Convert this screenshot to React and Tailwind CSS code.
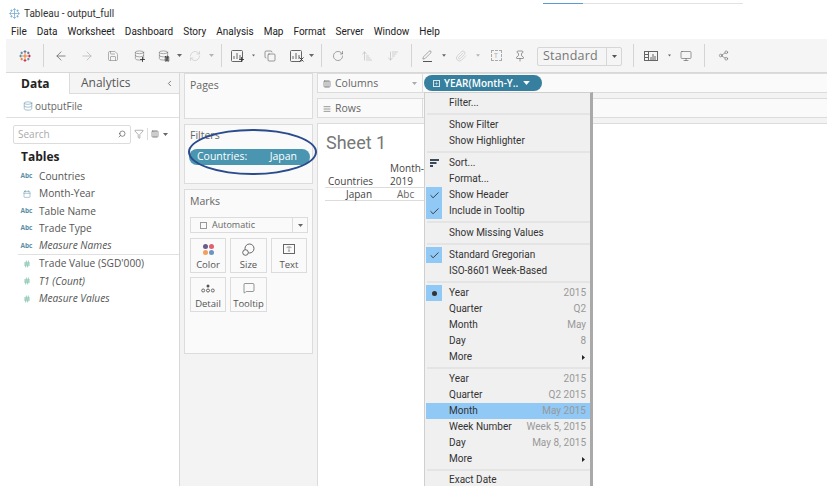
import React from "react";
import { ArrowLeft, ArrowRight, Save, Database, RefreshCw, Copy, Paperclip, Pin, Monitor, Share2, Search, Filter, Calendar, Hash, Check, Pen, Columns3, AlignJustify, ChevronLeft, MessageSquare, Type, ArrowDownWideNarrow, ArrowUpNarrowWide, X, Plus, Pause, RotateCw } from "lucide-react";

const Logo = ({ size = 14, mono }) => {
  const c = mono ? ["#7fb2d6", "#7fb2d6", "#7fb2d6", "#7fb2d6"] : ["#e8762b", "#c72037", "#5b6591", "#59879b"];
  return (
    <svg width={size} height={size} viewBox="0 0 20 20" strokeWidth="1.6" strokeLinecap="round">
      <path d="M10 6v8M6 10h8" stroke={c[0]} />
      <path d="M10 1v3.4M8.3 2.7h3.4" stroke={c[2]} />
      <path d="M10 15.6V19M8.3 17.3h3.4" stroke={c[1]} />
      <path d="M1 10h3.4M2.7 8.3v3.4" stroke={c[3]} />
      <path d="M15.6 10H19M17.3 8.3v3.4" stroke={c[1]} />
      <path d="M4.5 3.4v3M3 4.9h3" stroke={c[3]} />
      <path d="M15.5 3.4v3M14 4.9h3" stroke={c[2]} />
      <path d="M4.5 13.6v3M3 15.1h3" stroke={c[0]} />
      <path d="M15.5 13.6v3M14 15.1h3" stroke={c[3]} />
    </svg>
  );
};

const Caret = ({ className = "" }) => (
  <svg width="5" height="3" viewBox="0 0 5 3" className={className}><path d="M0 0h5L2.5 3z" fill="currentColor" /></svg>
);

const SheetIcon = () => (
  <svg width="12" height="12" viewBox="0 0 12 12" fill="none" stroke="currentColor" strokeWidth="1">
    <rect x="0.5" y="0.5" width="11" height="11" rx="1" />
    <path d="M3 9V6M6 9V3M9 9V5" />
  </svg>
);

const ShowMe = () => (
  <svg width="14" height="10" viewBox="0 0 14 10" fill="none" stroke="currentColor" strokeWidth="1">
    <rect x="0.5" y="0.5" width="13" height="9" />
    <path d="M4.5 0.5v9M0.5 3.5h4M0.5 6.5h4M7 9V6M9 9V3M11 9V5" />
  </svg>
);

const Cell = ({ className = "", children }) => (
  <div className={`flex items-center justify-center shrink-0 h-full ${className}`}>{children}</div>
);

const Sep = ({ className = "" }) => <div className={`w-px h-[23px] bg-[#d4d4d4] shrink-0 ${className}`} />;

const MenuBar = () => (
  <div className="flex items-center h-[15px] pl-[11px] gap-[10px] text-[10px] text-[#222]" style={{ fontFamily: 'Roboto, sans-serif' }}>
    {["File", "Data", "Worksheet", "Dashboard", "Story", "Analysis", "Map", "Format", "Server", "Window", "Help"].map((m) => (
      <span key={m}>{m}</span>
    ))}
  </div>
);

const Toolbar = () => (
  <div className="flex items-center h-[34px] ml-[6px] mr-[4px] bg-[#f5f5f5] border-b border-[#d8d8d8] text-[#666]">
    <Cell className="w-[37px]"><Logo size={12} /></Cell>
    <Sep />
    <div className="w-[4px]" />
    <Cell className="w-[26px]"><ArrowLeft size={14} strokeWidth={1.3} /></Cell>
    <Cell className="w-[26px] text-[#b5b5b5]"><ArrowRight size={14} strokeWidth={1.3} /></Cell>
    <Cell className="w-[26px] text-[#888]"><Save size={12} strokeWidth={1.3} /></Cell>
    <Cell className="w-[26px] relative"><Database size={11} strokeWidth={1.2} /><Plus size={7} strokeWidth={3} className="absolute right-[6px] bottom-[9px] text-[#333]" /></Cell>
    <Cell className="w-[22px] relative"><Database size={11} strokeWidth={1.2} /><Pause size={6} strokeWidth={3} className="absolute right-[4px] bottom-[10px] text-[#333]" /></Cell>
    <Cell className="w-[10px]"><Caret /></Cell>
    <Cell className="w-[22px] text-[#c2c2c2]"><RefreshCw size={12} strokeWidth={1.2} /></Cell>
    <Cell className="w-[10px] text-[#b5b5b5]"><Caret /></Cell>
    <Sep className="ml-[5px]" />
    <Cell className="w-[30px] relative"><SheetIcon /><Plus size={7} strokeWidth={3} className="absolute right-[7px] bottom-[9px] text-[#333]" /></Cell>
    <Cell className="w-[3px]"><Caret /></Cell>
    <Cell className="w-[30px]"><Copy size={12} strokeWidth={1.3} /></Cell>
    <Cell className="w-[22px] relative"><SheetIcon /><X size={7} strokeWidth={3} className="absolute right-[2px] bottom-[9px] text-[#333]" /></Cell>
    <Cell className="w-[8px]"><Caret /></Cell>
    <Sep className="ml-[6px]" />
    <Cell className="w-[32px]"><RotateCw size={12} strokeWidth={1.2} strokeDasharray="2 1.5" /></Cell>
    <Cell className="w-[26px] text-[#b5b5b5]"><ArrowUpNarrowWide size={12} strokeWidth={1.2} /></Cell>
    <Cell className="w-[26px] text-[#b5b5b5]"><ArrowDownWideNarrow size={12} strokeWidth={1.2} /></Cell>
    <Sep className="ml-[5px]" />
    <Cell className="w-[30px]">
      <div className="flex flex-col items-center">
        <Pen size={10} strokeWidth={1.3} />
        <div className="w-[9px] h-px bg-[#555] mt-[1px]" />
      </div>
    </Cell>
    <Cell className="w-[4px]"><Caret /></Cell>
    <Cell className="w-[30px] text-[#c2c2c2]"><Paperclip size={12} strokeWidth={1.3} /></Cell>
    <Cell className="w-[4px] text-[#b5b5b5]"><Caret /></Cell>
    <Cell className="w-[32px] text-[#aaa]"><div className="flex items-center justify-center w-[11px] h-[11px] border border-dashed border-[#aaa] text-[7px] leading-none">T</div></Cell>
    <Cell className="w-[16px]"><Pin size={12} strokeWidth={1.3} /></Cell>
    <div className="ml-[9px] mt-[1px] flex items-center w-[85px] h-[19px] border border-[#d6d6d6] rounded-[2px] text-[12.5px] text-[#777] shrink-0">
      <span className="pl-[5px] flex-1 tracking-[0.2px]">Standard</span>
      <div className="w-[15px] h-full border-l border-[#d6d6d6] flex items-center justify-center text-[#555]"><Caret /></div>
    </div>
    <Sep className="ml-[11px]" />
    <Cell className="w-[34px]"><ShowMe /></Cell>
    <Cell className="w-[3px]"><Caret /></Cell>
    <Cell className="w-[30px]"><Monitor size={12} strokeWidth={1.3} /></Cell>
    <Sep className="ml-[3px]" />
    <Cell className="w-[36px]"><Share2 size={11} strokeWidth={1.3} /></Cell>
  </div>
);

const Abc = () => <span className="text-[6.5px] font-bold text-[#5b8fa8] leading-none">Abc</span>;
const Num = () => <Hash size={8} strokeWidth={1.8} className="text-[#4aa88a]" />;

const Field = ({ icon, children, italic }) => (
  <div className="flex items-center h-[17.3px]">
    <div className="w-[19px] flex justify-center">{icon}</div>
    <span className={`ml-[3px] text-[10.2px] text-[#555] ${italic ? "italic" : ""}`}>{children}</span>
  </div>
);

const DataPane = () => (
  <div className="w-[174px] shrink-0 border-r border-[#d8d8d8] bg-white">
    <div className="flex h-[21px] bg-[#f5f5f5] border-b border-[#dcdcdc] text-[12px]">
      <div className="w-[64px] h-[21px] bg-white border-r border-[#dcdcdc] pl-[15px] font-bold text-[#222] flex items-center">Data</div>
      <div className="flex-1 pl-[11px] text-[#555] flex items-center justify-between pr-[5px]">
        <span>Analytics</span>
        <ChevronLeft size={9} />
      </div>
    </div>
    <div className="flex items-center h-[24px] pl-[17px] pt-[1px] border-b border-[#e0e0e0] text-[10px] text-[#666]">
      <Database size={10} strokeWidth={1.3} className="text-[#5b8fa8]" />
      <span className="ml-[2px]">outputFile</span>
    </div>
    <div className="flex items-center pt-[6px] pl-[7px] h-[26px]">
      <div className="flex items-center w-[118px] h-[19px] bg-white border border-[#dcdcdc] rounded-[2px] px-[4px] text-[10px] text-[#aaa]">
        <span className="flex-1">Search</span>
        <Search size={8} className="text-[#555] -scale-x-100" />
      </div>
      <Filter size={10} strokeWidth={1.2} className="ml-[3px] text-[#666]" />
      <div className="w-px h-[12px] bg-[#ddd] ml-[3px]" />
      <Columns3 size={8} strokeWidth={2} className="ml-[3px] text-[#666]" />
      <Caret className="ml-[4px] text-[#666]" />
    </div>
    <div className="pl-[15px] pt-[4px] h-[24px] text-[12px] font-bold text-[#222]">Tables</div>
    <div className="pl-[11px]">
      <Field icon={<Abc />}>Countries</Field>
      <Field icon={<Calendar size={8} strokeWidth={1.5} className="text-[#5b8fa8]" />}>Month-Year</Field>
      <Field icon={<Abc />}>Table Name</Field>
      <Field icon={<Abc />}>Trade Type</Field>
      <Field icon={<Abc />} italic>Measure Names</Field>
    </div>
    <div className="border-t border-[#e0e0e0] ml-[12px]">
      <div className="-ml-[1px]">
        <Field icon={<Num />}>Trade Value (SGD'000)</Field>
        <Field icon={<Num />} italic>T1 (Count)</Field>
        <Field icon={<Num />} italic>Measure Values</Field>
      </div>
    </div>
  </div>
);

const MarkBtn = ({ label, icon, className = "" }) => (
  <div className={`flex flex-col items-center h-[35px] border border-[#dcdcdc] bg-[#fafafa] text-[9.5px] text-[#555] ${className}`}>
    <div className="h-[20px] flex items-center">{icon}</div>
    <span className="leading-[12px]">{label}</span>
  </div>
);

const Cards = () => (
  <div className="w-[129px] ml-[4px] shrink-0 flex flex-col gap-[5px] text-[#666] text-[10.5px]">
    <div className="h-[46px] bg-[#fafafa] border border-[#dcdcdc] px-[5px] pt-[4px]">Pages</div>
    <div className="h-[60px] bg-[#fafafa] border border-[#dcdcdc] px-[5px] pt-[4px]">
      <div className="leading-[12px]">Filters</div>
      <div className="flex justify-between mt-[8px] -ml-[1px] w-[121px] h-[16px] items-center rounded-full bg-[#4a96b0] text-white pl-[8px] pr-[13px]">
        <span>Countries:</span><span>Japan</span>
      </div>
    </div>
    <div className="h-[165px] bg-[#fafafa] border border-[#dcdcdc] px-[5px] pt-[4px]">
      <div className="leading-[14px]">Marks</div>
      <div className="mt-[9px] flex items-center w-[118px] h-[16px] border border-[#dcdcdc] text-[9px]">
        <div className="w-[7px] h-[7px] border border-[#999] ml-[9px]" />
        <span className="ml-[5px] flex-1">Automatic</span>
        <div className="w-[15px] h-full border-l border-[#dcdcdc] flex items-center justify-center"><Caret /></div>
      </div>
      <div className="mt-[5px] grid grid-cols-[36px_37px_36px] gap-x-[4px] gap-y-[4px]">
        <MarkBtn label="Color" icon={<div className="grid grid-cols-2 gap-[1px]"><i className="w-[5px] h-[5px] rounded-full bg-[#6a5b8c]" /><i className="w-[5px] h-[5px] rounded-full bg-[#e2606e]" /><i className="w-[5px] h-[5px] rounded-full bg-[#f2a15c]" /><i className="w-[5px] h-[5px] rounded-full bg-[#6c94c4]" /></div>} />
        <MarkBtn label="Size" icon={<svg width="13" height="13" viewBox="0 0 13 13" fill="none" stroke="#666"><circle cx="7.5" cy="5.5" r="4.5" /><circle cx="3.5" cy="9.5" r="2.8" fill="#fafafa" /></svg>} />
        <MarkBtn label="Text" icon={<div className="w-[12px] h-[10px] border border-[#666] flex items-center justify-center"><Type size={6} /></div>} />
        <MarkBtn label="Detail" icon={<svg width="14" height="9" viewBox="0 0 14 9" fill="none" stroke="#666"><circle cx="7" cy="2" r="1.5" fill="#555" stroke="none" /><circle cx="2.2" cy="6.5" r="1.5" /><circle cx="7" cy="6.5" r="1.5" /><circle cx="11.8" cy="6.5" r="1.5" /></svg>} />
        <MarkBtn label="Tooltip" icon={<MessageSquare size={12} strokeWidth={1.2} />} />
      </div>
    </div>
  </div>
);

const Shelf = ({ icon, label, caret, children }) => (
  <div className="flex h-[20px] bg-[#fafafa] border-y border-[#dcdcdc] items-center">
    <div className="flex items-center w-[106px] h-full border-l border-r border-[#dcdcdc] pl-[5px] pr-[5px] pt-[1px] text-[10.5px] text-[#666]">
      {icon}
      <span className="ml-[4px] flex-1">{label}</span>
      {caret && <Caret className="text-[#aaa]" />}
    </div>
    {children}
  </div>
);

const Sheet = () => (
  <div className="flex-1 ml-[4px] flex flex-col min-w-0">
    <div className="flex flex-col gap-[5px]">
      <Shelf icon={<Columns3 size={8} strokeWidth={2} />} label="Columns" caret />
      <Shelf icon={<AlignJustify size={8} strokeWidth={2} />} label="Rows" />
    </div>
    <div className="mt-[5px] flex-1 bg-white border-l border-t border-[#dcdcdc] pl-[8px] pt-[6px]">
      <div className="text-[18px] leading-[26px] text-[#777]" style={{ fontFamily: 'Roboto, sans-serif' }}>Sheet 1</div>
      <div className="mt-[6px] -ml-[1px] w-[107px] text-[10px] text-[#444] font-medium">
        <div className="grid grid-cols-[62px_45px] leading-[13px] pl-[3px] h-[26px] border-b border-[#dcdcdc] items-end">
          <span>Countries</span>
          <span className="whitespace-nowrap">Month-<br />2019</span>
        </div>
        <div className="grid grid-cols-[72px_35px] h-[13px] leading-[12px] border-b border-[#dcdcdc]">
          <span className="pl-[21px]">Japan</span>
          <span className="font-normal text-[#666]">Abc</span>
        </div>
      </div>
    </div>
  </div>
);

const Row = ({ label, right, mark, active, more }) => (
  <div className={`flex items-center h-[16px] ${active ? "bg-[#90c8f6]" : ""}`}>
    <div className={`w-[16px] h-full flex items-center justify-center shrink-0 ${mark === "check" || mark === "dot" ? "bg-[#90c8f6]" : ""}`}>
      {mark === "check" && <Check size={11} strokeWidth={2} className="text-[#333]" />}
      {mark === "dot" && <span className="w-[5px] h-[5px] rounded-full bg-[#333]" />}
      {mark === "sort" && <svg width="9" height="8" viewBox="0 0 9 8" fill="#3a4a5c"><rect width="9" height="2" /><rect y="3" width="6.5" height="2" /><rect y="6" width="3" height="2" /></svg>}
    </div>
    <span className="ml-[7px] flex-1 text-[#333]">{label}</span>
    {right && <span className="pr-[4px] text-[#999]">{right}</span>}
    {more && <svg width="3" height="5" viewBox="0 0 3 5" className="mr-[5px]"><path d="M0 0l3 2.5L0 5z" fill="#222" /></svg>}
  </div>
);

const MSep = ({ className = "h-[6px]" }) => (
  <div className={`${className} flex items-center pl-[1px]`}><div className="h-[2px] w-full bg-[#e4e4e4]" /></div>
);

const DropMenu = () => (
  <div className="absolute left-[424px] top-[92px] w-[169px] h-[394px] overflow-hidden bg-[#f0f0f0] border-l border-t border-[#cfcfcf] border-r-[3px] border-r-[#a9a9a9] pl-[1px] pt-[2px] text-[10px] leading-none" style={{ fontFamily: 'Roboto, sans-serif' }}>
    <Row label="Filter..." />
    <MSep />
    <Row label="Show Filter" />
    <Row label="Show Highlighter" />
    <MSep />
    <Row label="Sort..." mark="sort" />
    <Row label="Format..." />
    <Row label="Show Header" mark="check" />
    <Row label="Include in Tooltip" mark="check" />
    <MSep />
    <Row label="Show Missing Values" />
    <MSep />
    <Row label="Standard Gregorian" mark="check" />
    <Row label="ISO-8601 Week-Based" />
    <MSep />
    <Row label="Year" right="2015" mark="dot" />
    <Row label="Quarter" right="Q2" />
    <Row label="Month" right="May" />
    <Row label="Day" right="8" />
    <Row label="More" more />
    <MSep />
    <Row label="Year" right="2015" />
    <Row label="Quarter" right="Q2 2015" />
    <Row label="Month" right="May 2015" active />
    <Row label="Week Number" right="Week 5, 2015" />
    <Row label="Day" right="May 8, 2015" />
    <Row label="More" more />
    <MSep className="h-[5px]" />
    <Row label="Exact Date" />
  </div>
);

export default function App() {
  return (
    <div className="relative w-[831px] h-[486px] overflow-hidden bg-white" style={{ fontFamily: '"Open Sans", "Noto Sans", sans-serif' }}>
      <div className="flex items-center h-[24px] pl-[9px] pt-[2px] text-[10px] text-[#333]" style={{ fontFamily: 'Roboto, sans-serif' }}>
        <Logo size={11} mono />
        <span className="ml-[4px]">Tableau - output_full</span>
      </div>
      <MenuBar />
      <Toolbar />
      <div className="flex h-[413px] ml-[6px] mr-[4px] bg-[#f3f3f3]">
        <DataPane />
        <Cards />
        <Sheet />
      </div>

      <div className="absolute left-[543px] top-[3px] w-[40px] h-px bg-[#5b9bd5]" />
      <div className="absolute left-[583px] top-[3px] w-[160px] h-px bg-[#e2e2e2]" />

      <div className="absolute left-[424px] top-[75px] w-[118px] h-[16px] rounded-full bg-[#367f9e] text-white text-[10px] font-semibold flex items-center pl-[9px]">
        <div className="w-[7px] h-[7px] border border-white/80 flex items-center justify-center"><Plus size={5} strokeWidth={2} /></div>
        <span className="ml-[4px] flex-1">YEAR(Month-Y..</span>
        <Caret className="mr-[12px] w-[7px] h-[4px]" />
      </div>
      <DropMenu />
      <div className="absolute left-[188px] top-[129px] w-[129px] h-[46px] rounded-[50%] border-2 border-[#2a4b8d]" />
    </div>
  );
}
